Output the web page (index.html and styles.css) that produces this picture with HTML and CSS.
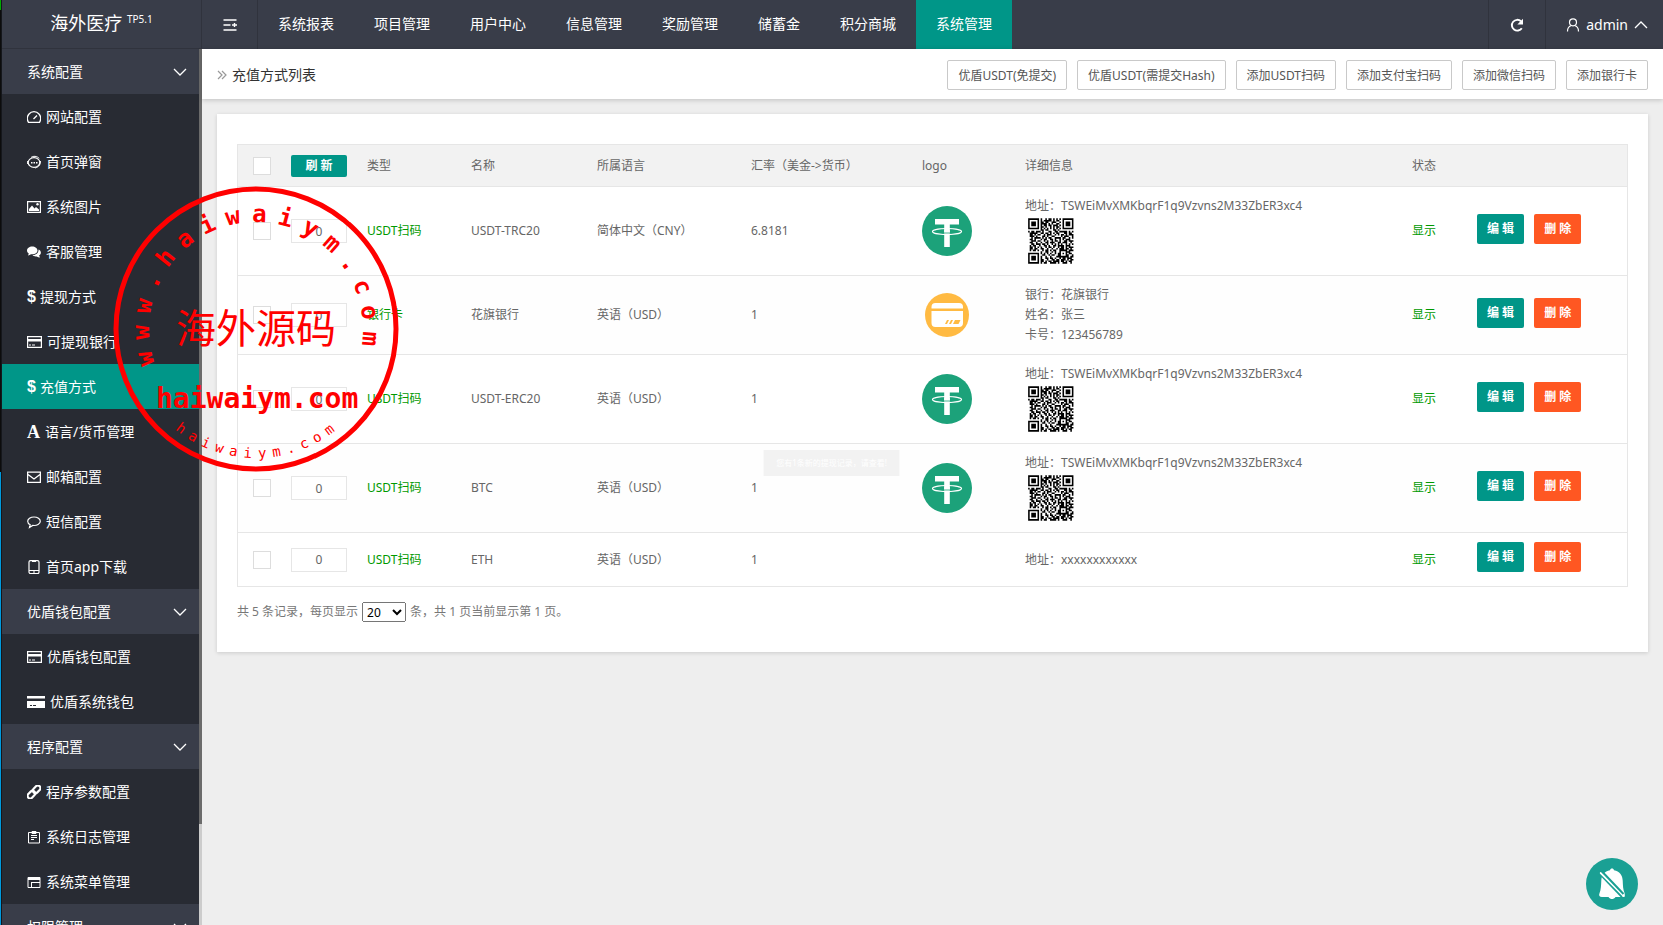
FILE: index.html
```html
<!DOCTYPE html>
<html lang="zh-CN">
<head>
  <meta charset="UTF-8">
  <meta name="viewport" content="width=device-width, initial-scale=1.0">
  <title>充值方式列表</title>
  <link rel="stylesheet" href="styles.css">
</head>
<body>
  <svg class="sprite" aria-hidden="true">
    <symbol id="i-down" viewBox="0 0 14 14"><path d="M1 4l6 6 6-6" fill="none" stroke="currentColor" stroke-width="1.3"/></symbol>
    <symbol id="i-up" viewBox="0 0 14 14"><path d="M1 10l6-6 6 6" fill="none" stroke="currentColor" stroke-width="1.3"/></symbol>
    <symbol id="i-gauge" viewBox="0 0 14 14"><path d="M1.500 12.300C-.2 9.500.3 6 2 4 4.500.9 9.500.9 12 4c1.700 2 2.200 5.500.5 8.300zM6.500 9l3.500-3.500" fill="none" stroke="currentColor" stroke-width="1.300"/></symbol>
    <symbol id="i-face" viewBox="0 0 14 14"><ellipse cx="7" cy="7.500" rx="5.800" ry="4.800" fill="none" stroke="currentColor" stroke-width="1.200"/><path d="M4 2.500C6 .8 10 .8 12.300 3.500M.6 6v3M13.400 6c.3 3-1.300 6-5.300 7" fill="none" stroke="currentColor"/><path d="M4 7h1.500v1.500H4zM6.500 7H8v1.500H6.500zM9 7h1.500v1.500H9z" fill="currentColor"/></symbol>
    <symbol id="i-image" viewBox="0 0 14 14"><path d="M.6 1.600h12.800v10.800H.6z" fill="none" stroke="currentColor" stroke-width="1.200"/><path d="M2 11V9l3-3.500 2.500 3L9 7l3 2.500V11z" fill="currentColor"/><circle cx="10.500" cy="4.200" r="1.200" fill="currentColor"/></symbol>
    <symbol id="i-chats" viewBox="0 0 14 14"><path d="M5.200 1.500C2.300 1.500 0 3.200 0 5.500c0 1.300.8 2.300 1.800 3L1 10.500c1.200-.1 2.200-.6 3-1.200 3.500.4 6.500-1.200 6.500-3.800 0-2.300-2.400-4-5.300-4z" fill="currentColor"/><path d="M11.500 4.500c.3 3.200-2.500 5.500-6 5.800 1 .9 2.500 1.300 4.200 1.100.9.700 2 1.100 3.300 1.100l-.9-1.900c2.600-1.600 2.300-4.900-.6-6.100z" fill="currentColor"/></symbol>
    <symbol id="i-card" viewBox="0 0 15 14"><path d="M.6 1.600h13.800v10.800H.6z" fill="none" stroke="currentColor" stroke-width="1.200"/><path d="M0 4h15v2.500H0zM2 9.500h2v1H2zM5 9.500h3v1H5z" fill="currentColor"/></symbol>
    <symbol id="i-cardfill" viewBox="0 0 18 14"><path d="M0 1h18v2.500H0zM0 6h18v7H0z" fill="currentColor"/><path d="M3 10h2v1H3zM6 10h3v1H6z" fill="#282b33"/></symbol>
    <symbol id="i-mail" viewBox="0 0 14 14"><path d="M.6 2.100h12.800v10.300H.6zM1 4.500l6 4.500 6-4.500" fill="none" stroke="currentColor" stroke-width="1.300"/></symbol>
    <symbol id="i-bubble" viewBox="0 0 14 14"><path d="M7 2C3.500 2 .7 3.900.7 6.300c0 1.500 1 2.700 2.500 3.500L2.500 12.500l3.200-2.100C10 10.900 13.300 9 13.300 6.300 13.300 3.900 10.500 2 7 2z" fill="none" stroke="currentColor" stroke-width="1.200"/></symbol>
    <symbol id="i-phone" viewBox="0 0 14 14"><rect x="2" y=".6" width="10" height="13" rx="1.500" fill="none" stroke="currentColor" stroke-width="1.200"/><path d="M2 10.500h10M6 12h2M5 1.500h4" stroke="currentColor"/></symbol>
    <symbol id="i-link" viewBox="0 0 14 14"><g transform="rotate(-45 7 7)" fill="none" stroke="currentColor" stroke-width="2.200"><rect x="-1" y="4.400" width="8.500" height="5.200" rx="2.600"/><rect x="6.500" y="4.400" width="8.500" height="5.200" rx="2.600"/></g></symbol>
    <symbol id="i-log" viewBox="0 0 14 14"><path d="M1.500 2.500h11v10.500h-11zM4 5.500h6M4 7.500h6M4 9.500h3M5 3.500v-2h4v2z" fill="none" stroke="currentColor"/></symbol>
    <symbol id="i-window" viewBox="0 0 14 14"><path d="M1 2.500h12v10H1zM4.500 7v5.500M4.500 7.500H13" fill="none" stroke="currentColor"/><path d="M1 2h12v3H1z" fill="currentColor"/></symbol>
    <symbol id="i-fold" viewBox="0 0 14 14"><path d="M.5 2h13M.5 7h7M.5 12h13" stroke="currentColor" stroke-width="1.700"/><path d="M9 7h5M11.500 5v4" stroke="currentColor" stroke-width="1.400"/></symbol>
    <symbol id="i-refresh" viewBox="0 0 14 14"><path d="M11.800 10.200A5.400 5.400 0 1 1 11 3.300" fill="none" stroke="currentColor" stroke-width="1.900"/><path d="M13 .8v5.700H7.300z" fill="currentColor"/></symbol>
    <symbol id="i-user" viewBox="0 0 14 14"><circle cx="7" cy="4.300" r="3.500" fill="none" stroke="currentColor" stroke-width="1.200"/><path d="M1.500 13.500c0-3.500 1.800-5.500 4-6M12.500 13.500c0-3.500-1.800-5.500-4-6" fill="none" stroke="currentColor" stroke-width="1.200"/></symbol>
    <symbol id="i-usdt" viewBox="0 0 50 50">
      <circle cx="25" cy="25" r="25" fill="#1ca27a"/>
      <path d="M13 13h24v5.500h-9.200V41h-5.600V18.500H13z" fill="#fff"/>
      <ellipse cx="25" cy="25.500" rx="14.500" ry="3" fill="none" stroke="#fff" stroke-width="1.200"/>
      <path d="M22.200 23.500h5.600v3.500h-5.600z" fill="#fff"/>
      <path d="M20 27h10" stroke="#1ca27a" stroke-width=".8"/>
    </symbol>
    <symbol id="i-bank" viewBox="0 0 50 50">
      <circle cx="25" cy="25" r="22" fill="#ffba42"/>
      <path d="M9.500 18.500V17q0-4 4-4h23.500q4 0 4 4v1.500zM9.500 21h31.500v12q0 4-4 4H13.500q-4 0-4-4z" fill="#fff"/>
      <path d="M25 30h2l-2 4h-2zM29 30h2l-2 4h-2zM33 30h5.500l-2 4H31z" fill="#ffba42"/>
    </symbol>
    <symbol id="i-qr" viewBox="-2 -1 32 31"><path id="qrPath" fill="#000"/></symbol>
  </svg>

  <div class="edge"></div>
  <div class="app">
    <header class="header">
      <div class="logo">海外医疗 <sup>TP5.1</sup></div>
      <button class="fold" type="button" aria-label="折叠"><svg class="icon"><use href="#i-fold"/></svg></button>
      <nav class="topnav">
        <a href="#">系统报表</a>
        <a href="#">项目管理</a>
        <a href="#">用户中心</a>
        <a href="#">信息管理</a>
        <a href="#">奖励管理</a>
        <a href="#">储蓄金</a>
        <a href="#">积分商城</a>
        <a href="#" class="active">系统管理</a>
      </nav>
      <button class="refresh" type="button" aria-label="刷新"><svg class="icon"><use href="#i-refresh"/></svg></button>
      <a href="#" class="user"><svg class="icon"><use href="#i-user"/></svg>admin<svg class="icon arrow"><use href="#i-up"/></svg></a>
    </header>

    <div class="body">
      <aside class="sidebar">
        <nav class="menu">
          <a href="#" class="group">系统配置<svg class="icon"><use href="#i-down"/></svg></a>
          <a href="#"><svg class="icon"><use href="#i-gauge"/></svg>网站配置</a>
          <a href="#"><svg class="icon"><use href="#i-face"/></svg>首页弹窗</a>
          <a href="#"><svg class="icon"><use href="#i-image"/></svg>系统图片</a>
          <a href="#"><svg class="icon"><use href="#i-chats"/></svg>客服管理</a>
          <a href="#"><b class="dollar">$</b>提现方式</a>
          <a href="#"><svg class="icon icon-card"><use href="#i-card"/></svg>可提现银行</a>
          <a href="#" class="active"><b class="dollar">$</b>充值方式</a>
          <a href="#"><b class="letter">A</b>语言/货币管理</a>
          <a href="#"><svg class="icon"><use href="#i-mail"/></svg>邮箱配置</a>
          <a href="#"><svg class="icon"><use href="#i-bubble"/></svg>短信配置</a>
          <a href="#"><svg class="icon"><use href="#i-phone"/></svg>首页app下载</a>
          <a href="#" class="group">优盾钱包配置<svg class="icon"><use href="#i-down"/></svg></a>
          <a href="#"><svg class="icon icon-card"><use href="#i-card"/></svg>优盾钱包配置</a>
          <a href="#"><svg class="icon icon-wide"><use href="#i-cardfill"/></svg>优盾系统钱包</a>
          <a href="#" class="group">程序配置<svg class="icon"><use href="#i-down"/></svg></a>
          <a href="#"><svg class="icon"><use href="#i-link"/></svg>程序参数配置</a>
          <a href="#"><svg class="icon"><use href="#i-log"/></svg>系统日志管理</a>
          <a href="#"><svg class="icon"><use href="#i-window"/></svg>系统菜单管理</a>
          <a href="#" class="group">权限管理<svg class="icon"><use href="#i-down"/></svg></a>
        </nav>
        <div class="scroll"><div class="thumb"></div></div>
      </aside>

      <main class="main">
        <div class="titlebar">
          <h1><svg class="crumb" viewBox="0 0 10 10"><path d="M1 1l4 4-4 4M5 1l4 4-4 4" fill="none" stroke="#999" stroke-width="1.200"/></svg>充值方式列表</h1>
          <div class="tools">
            <button type="button">优盾USDT(免提交)</button>
            <button type="button">优盾USDT(需提交Hash)</button>
            <button type="button">添加USDT扫码</button>
            <button type="button">添加支付宝扫码</button>
            <button type="button">添加微信扫码</button>
            <button type="button">添加银行卡</button>
          </div>
        </div>

        <section class="card">
          <table class="list">
            <colgroup>
              <col class="c-check"><col class="c-sort"><col class="c-type"><col class="c-name"><col class="c-lang">
              <col class="c-rate"><col class="c-logo"><col><col class="c-status"><col class="c-action">
            </colgroup>
            <thead>
              <tr>
                <th class="check"><input type="checkbox" aria-label="全选"></th>
                <th><button type="button" class="btn btn-small">刷 新</button></th>
                <th>类型</th>
                <th>名称</th>
                <th>所属语言</th>
                <th>汇率（美金-&gt;货币）</th>
                <th>logo</th>
                <th>详细信息</th>
                <th>状态</th>
                <th></th>
              </tr>
            </thead>
            <tbody>
              <tr>
                <td class="check"><input type="checkbox" aria-label="选择"></td>
                <td><input type="text" class="sort" value="0" aria-label="排序"></td>
                <td class="green">USDT扫码</td>
                <td>USDT-TRC20</td>
                <td>简体中文（CNY）</td>
                <td>6.8181</td>
                <td><svg class="pic"><use href="#i-usdt"/></svg></td>
                <td>地址：TSWEiMvXMKbqrF1q9Vzvns2M33ZbER3xc4<svg class="pic"><use href="#i-qr"/></svg></td>
                <td class="green">显示</td>
                <td><div class="actions"><button type="button" class="btn">编 辑</button><button type="button" class="btn btn-danger">删 除</button></div></td>
              </tr>
              <tr>
                <td class="check"><input type="checkbox" aria-label="选择"></td>
                <td><input type="text" class="sort" value="0" aria-label="排序"></td>
                <td class="green">银行卡</td>
                <td>花旗银行</td>
                <td>英语（USD）</td>
                <td>1</td>
                <td><svg class="pic"><use href="#i-bank"/></svg></td>
                <td>银行：花旗银行<br>姓名：张三<br>卡号：123456789</td>
                <td class="green">显示</td>
                <td><div class="actions"><button type="button" class="btn">编 辑</button><button type="button" class="btn btn-danger">删 除</button></div></td>
              </tr>
              <tr>
                <td class="check"><input type="checkbox" aria-label="选择"></td>
                <td><input type="text" class="sort" value="0" aria-label="排序"></td>
                <td class="green">USDT扫码</td>
                <td>USDT-ERC20</td>
                <td>英语（USD）</td>
                <td>1</td>
                <td><svg class="pic"><use href="#i-usdt"/></svg></td>
                <td>地址：TSWEiMvXMKbqrF1q9Vzvns2M33ZbER3xc4<svg class="pic"><use href="#i-qr"/></svg></td>
                <td class="green">显示</td>
                <td><div class="actions"><button type="button" class="btn">编 辑</button><button type="button" class="btn btn-danger">删 除</button></div></td>
              </tr>
              <tr>
                <td class="check"><input type="checkbox" aria-label="选择"></td>
                <td><input type="text" class="sort" value="0" aria-label="排序"></td>
                <td class="green">USDT扫码</td>
                <td>BTC</td>
                <td>英语（USD）</td>
                <td>1</td>
                <td><svg class="pic"><use href="#i-usdt"/></svg></td>
                <td>地址：TSWEiMvXMKbqrF1q9Vzvns2M33ZbER3xc4<svg class="pic"><use href="#i-qr"/></svg></td>
                <td class="green">显示</td>
                <td><div class="actions"><button type="button" class="btn">编 辑</button><button type="button" class="btn btn-danger">删 除</button></div></td>
              </tr>
              <tr>
                <td class="check"><input type="checkbox" aria-label="选择"></td>
                <td><input type="text" class="sort" value="0" aria-label="排序"></td>
                <td class="green">USDT扫码</td>
                <td>ETH</td>
                <td>英语（USD）</td>
                <td>1</td>
                <td></td>
                <td>地址：xxxxxxxxxxxx</td>
                <td class="green">显示</td>
                <td><div class="actions"><button type="button" class="btn">编 辑</button><button type="button" class="btn btn-danger">删 除</button></div></td>
              </tr>
            </tbody>
          </table>
          <div class="pager">
            <label for="pageSize">共 5 条记录，每页显示</label>
            <select id="pageSize"><option>20</option><option>50</option></select>
            <span>条，共 1 页当前显示第 1 页。</span>
          </div>
        </section>
      </main>
    </div>
  </div>

  <div class="toast">您有1条新的提现记录，请查看!</div>

  <button class="bell" type="button" aria-label="提醒">
    <svg viewBox="0 0 52 52">
      <path d="M26 10.500c1 0 1.800.7 2 1.700 5.500 1 8.500 5 8.700 10.300.2 5 .3 9 2 13 .5 2-.7 3.500-2.700 3.500h-6.500c-2 2.700-5 2.700-7 0H16c-2.500 0-3.500-1.800-2.500-3.800 1.500-3.500 1.600-8 1.800-12.700.2-5.300 3.200-9.300 8.700-10.300.2-1 1-1.700 2-1.700z" fill="#fff"/>
      <path d="M13.500 15.500L36 39" stroke="#1aa094" stroke-width="2"/>
      <path d="M14.800 15l23 23" stroke="#fff" stroke-width="2" stroke-linecap="round"/>
      <path d="M16 13.500L37.500 36" stroke="#1aa094" stroke-width="2"/>
    </svg>
  </button>

  <svg class="seal" viewBox="0 0 286 286">
    <circle cx="143" cy="143" r="140" fill="none" stroke="#f00" stroke-width="5"/>
    <g id="sealTop" class="seal-top"></g>
    <text class="seal-name" x="63" y="157">海外源码</text>
    <text class="seal-site" x="43" y="222">haiwaiym.com</text>
    <g id="sealBottom" class="seal-bottom"></g>
  </svg>

  <script>
    // QR modules, one string per row
    const qr = [
      '#######.#..#.##.#.#.#.#######',
      '#.....#.#.#####.#.##..#.....#',
      '#.###.#.##.##..###..#.#.###.#',
      '#.###.#.####.#.#..##..#.###.#',
      '#.###.#.#.##.##.###.#.#.###.#',
      '#.....#.##.#..#.#.##..#.....#',
      '#######.#.#.#.#.#.#.#.#######',
      '........##.##...##.#.........',
      '#.##.###.#...##..##.#####.#.#',
      '.#####..##.##.#.#.##...##.##.',
      '.##.#.##..#.###..#.#.##.#.###',
      '.###.#...##.#..##....#.###..#',
      '..#.####.#.#.##..####.##..#.#',
      '.##.#...#.##..##.#..#.#.###..',
      '..###.##..#.#..#.##.#..##.###',
      '.##..#..#..##.###..##.###..#.',
      '..##.###.##.#..#.#.#.#..#.#.#',
      '.#.##..#..##.#..##.####.###..',
      '.##.#.#.#..#.##.#..#.##.#.###',
      '.##.##..##..#..#..#.###.##.#.',
      '.#.##.#..#.##.#.##..#####.###',
      '........#..##..#.#..#...###..',
      '#######.#.#.#.#..#.##.#.#.##.',
      '#.....#..##..#.##..##...##..#',
      '#.###.#.#..#..#...########.##',
      '#.###.#.#..##.##.#..#.##.###.',
      '#.###.#.##..#..##.##.###.#.##',
      '#.....#.##.#.##.####.##.#.##.',
      '#######.#.##..####.#..###..#.'
    ];
    let d = '';
    qr.forEach((row, y) => {
      for (let x = 0; x < row.length; x++) {
        if (row[x] === '#') d += `M${x} ${y}h1v1h-1z`;
      }
    });
    document.getElementById('qrPath').setAttribute('d', d);

    // Place the letters of the seal around its centre
    function ring(id, text, from, to, y) {
      const step = (to - from) / (text.length - 1);
      document.getElementById(id).innerHTML = text.split('').map((c, i) =>
        `<text x="143" y="${y}" transform="rotate(${from + step * i} 143 143)">${c}</text>`
      ).join('');
    }
    ring('sealTop', 'www.haiwaiym.com', -105, 95, 36);
    ring('sealBottom', 'haiwaiym.com', 37, -36, 272);
  </script>
</body>
</html>
```
FILE: styles.css
```css
* {
  box-sizing: border-box;
}
body {
  margin: 0;
  height: 100vh;
  display: flex;
  overflow: hidden;
  background-color: #eee;
  color: #666;
  font-family: "Noto Sans", "Noto Sans CJK SC", sans-serif;
  font-size: 12px;
  line-height: 20px;
}
a {
  color: inherit;
  text-decoration: none;
}
button, input {
  font: inherit;
  margin: 0;
  padding: 0;
}
.sprite {
  position: absolute;
  width: 0;
  height: 0;
}
.icon {
  width: 14px;
  height: 14px;
  flex: none;
}
.edge {
  width: 2px;
  flex: none;
  border-right: 1px solid #15171c;
  background: linear-gradient(#0a0 10px, #0c0c0c 10px, #0c0c0c 51%, #09d 51%);
}
.app {
  flex: 1;
  min-width: 0;
  display: flex;
  flex-direction: column;
}

/* header */
.header {
  display: flex;
  flex: none;
  height: 49px;
  background-color: #393d49;
  color: #fff;
  font-size: 14px;
}
.logo {
  width: 200px;
  flex: none;
  border-right: 1px solid #30333d;
  border-bottom: 1px solid #30333d;
  text-align: center;
  font-size: 18px;
  line-height: 47px;
}
.logo sup {
  font-size: 10px;
  line-height: 0;
}
.fold, .refresh {
  width: 56px;
  border: 0;
  border-right: 1px solid #30333d;
  background: none;
  color: #fff;
  display: flex;
  align-items: center;
  justify-content: center;
}
.refresh {
  width: 58px;
  border-left: 1px solid #30333d;
}
.topnav {
  flex: 1;
  display: flex;
}
.topnav a {
  padding: 0 20px;
  line-height: 47px;
  white-space: nowrap;
}
.topnav a.active {
  background-color: #009688;
}
.user {
  display: flex;
  align-items: center;
  gap: 6px;
  padding: 0 15px 0 20px;
}

/* sidebar */
.body {
  flex: 1;
  min-height: 0;
  display: flex;
}
.sidebar {
  width: 200px;
  flex: none;
  display: flex;
  overflow: hidden;
  background-color: #393d49;
}
.menu {
  flex: 1;
  color: #fff;
  font-size: 14px;
}
.menu a {
  display: flex;
  align-items: center;
  gap: 5px;
  height: 45px;
  padding: 0 12px 0 25px;
  background-color: #282b33;
  white-space: nowrap;
}
.menu a.group {
  justify-content: space-between;
  background-color: #393d49;
}
.menu a.active {
  background-color: #009688;
}
.menu .icon-card {
  width: 15px;
}
.menu .icon-wide {
  width: 18px;
}
.dollar {
  width: 8px;
  font-family: "Liberation Sans", sans-serif;
  font-size: 16px;
}
.letter {
  width: 13px;
  font-family: "Liberation Serif", serif;
  font-size: 18px;
}
.scroll {
  width: 3px;
  background-color: #ccc;
}
.thumb {
  height: 88.5%;
  background-color: #6b6b6b;
}

/* content */
.main {
  flex: 1;
  min-width: 0;
}
.titlebar {
  display: flex;
  align-items: center;
  justify-content: space-between;
  height: 50px;
  padding: 2px 15px 0;
  background-color: #fff;
  box-shadow: 0 1px 5px rgba(0, 0, 0, 0.2);
}
.titlebar h1 {
  margin: 0;
  display: flex;
  align-items: center;
  gap: 5px;
  color: #333;
  font-size: 14px;
  font-weight: normal;
  line-height: 18px;
}
.crumb {
  width: 10px;
  height: 10px;
}
.tools {
  display: flex;
  gap: 10px;
}
.tools button {
  height: 30px;
  padding: 1px 10px 0;
  border: 1px solid #c9c9c9;
  border-radius: 2px;
  background-color: #fff;
  color: #555;
  white-space: nowrap;
}
.card {
  margin: 15px;
  padding: 30px 20px;
  background-color: #fff;
  box-shadow: 0 1px 4px rgba(0, 0, 0, 0.15);
}
.list {
  width: 100%;
  table-layout: fixed;
  border: 1px solid #e6e6e6;
  border-spacing: 0;
}
.c-check { width: 43px; }
.c-sort { width: 76px; }
.c-type { width: 104px; }
.c-name { width: 126px; }
.c-lang { width: 154px; }
.c-rate { width: 171px; }
.c-logo { width: 103px; }
.c-status { width: 65px; }
.c-action { width: 160px; }
.list th {
  height: 42px;
  padding: 0 10px;
  border-bottom: 1px solid #e6e6e6;
  background-color: #f2f2f2;
  font-weight: normal;
  text-align: left;
  white-space: nowrap;
}
.list td {
  padding: 9px 10px;
  border-bottom: 1px solid #e6e6e6;
}
.list tbody tr:last-child td {
  border-bottom: 0;
}
.list tbody tr:nth-child(even) {
  background-color: #fefefe;
}
.list .check {
  padding-left: 15px;
}
.list input[type="checkbox"] {
  appearance: none;
  display: block;
  width: 18px;
  height: 18px;
  border: 1px solid #ddd;
  background-color: #fff;
}
.sort {
  display: block;
  width: 56px;
  height: 24px;
  border: 1px solid #e6e6e6;
  background-color: #fff;
  color: #666;
  text-align: center;
}
.green {
  color: #090;
}
.pic {
  display: block;
  width: 50px;
  height: 50px;
}
.btn {
  display: block;
  height: 30px;
  padding: 0 10px;
  border: 0;
  border-radius: 2px;
  background-color: #009688;
  color: #fff;
  font-weight: bold;
}
.btn-small {
  width: 56px;
  height: 22px;
}
.btn-danger {
  background-color: #ff5722;
}
.actions {
  display: flex;
  gap: 10px;
  padding-bottom: 5px;
}
.pager {
  display: flex;
  align-items: center;
  gap: 4px;
  margin-top: 15px;
  color: #777;
}
.pager select {
  width: 44px;
  height: 20px;
  font-family: inherit;
  font-size: 12px;
}

/* floating */
.toast {
  position: fixed;
  top: 50%;
  left: 50%;
  transform: translate(-50%, -50%);
  padding: 3px 13px;
  background-color: #f2f2f2;
  color: #fff;
  font-size: 8px;
  white-space: nowrap;
}
.bell {
  position: fixed;
  right: 25px;
  bottom: 15px;
  width: 52px;
  height: 52px;
  border: 0;
  border-radius: 50%;
  background-color: #1aa094;
}
.bell svg {
  display: block;
}
.seal {
  position: absolute;
  top: 186px;
  left: 113px;
  width: 286px;
  height: 286px;
  fill: #f00;
  font-family: "DejaVu Sans Mono", monospace;
  pointer-events: none;
}
.seal-top {
  font-size: 24px;
  font-weight: bold;
  text-anchor: middle;
}
.seal-bottom {
  font-size: 14px;
  text-anchor: middle;
}
.seal-name {
  font-family: "Noto Sans CJK SC", sans-serif;
  font-size: 40px;
}
.seal-site {
  font-size: 28px;
  font-weight: bold;
}
```
